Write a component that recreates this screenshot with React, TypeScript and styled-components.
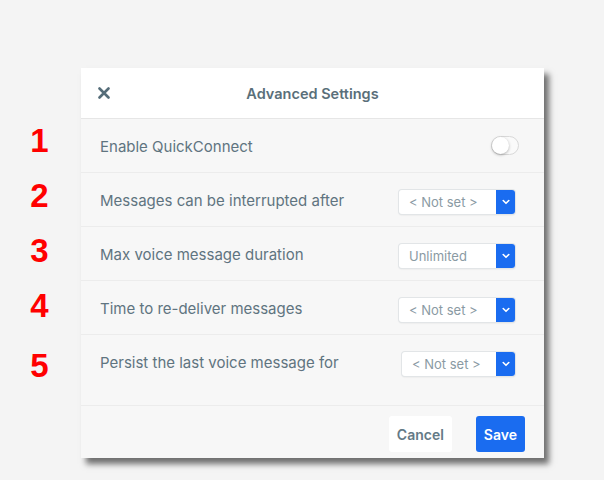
import styled, { createGlobalStyle } from "styled-components";

const GlobalStyle = createGlobalStyle`
  body {
    margin: 0;
    background: #f4f4f4;
    font-family: Inter, "Liberation Sans", Arial, sans-serif;
  }
`;

const settings = [
  { label: "Enable QuickConnect", kind: "toggle" },
  { label: "Messages can be interrupted after", kind: "select", value: "< Not set >" },
  { label: "Max voice message duration", kind: "select", value: "Unlimited" },
  { label: "Time to re-deliver messages", kind: "select", value: "< Not set >" },
  { label: "Persist the last voice message for", kind: "select", value: "< Not set >", shift: 3 },
];

export default function App() {
  return (
    <>
      <GlobalStyle />
      <StyledPage>
        <StyledNumbers>
          {settings.map((_, i) => (
            <StyledNumber key={i}>{i + 1}</StyledNumber>
          ))}
        </StyledNumbers>
        <StyledDialog>
          <StyledHeader>
            <StyledClose aria-label="Close">
              <svg width="12" height="12" viewBox="0 0 12 12">
                <path
                  d="M1.5 1.5 L10.5 10.5 M10.5 1.5 L1.5 10.5"
                  stroke="#556d79"
                  strokeWidth="2.6"
                  strokeLinecap="round"
                />
              </svg>
            </StyledClose>
            <StyledTitle>Advanced Settings</StyledTitle>
            <span />
          </StyledHeader>
          <StyledBody>
            {settings.map((s) => (
              <StyledRow key={s.label}>
                <StyledLabel>{s.label}</StyledLabel>
                {s.kind === "toggle" ? (
                  <StyledToggle>
                    <StyledKnob />
                  </StyledToggle>
                ) : (
                  <StyledSelect $shift={s.shift ?? 0}>
                    <StyledSelectValue>{s.value}</StyledSelectValue>
                    <StyledSelectArrow>
                      <svg width="8" height="6" viewBox="0 0 8 6">
                        <path
                          d="M1.2 1.5 L4 4.3 L6.8 1.5"
                          stroke="#fff"
                          strokeWidth="1.6"
                          fill="none"
                          strokeLinecap="round"
                          strokeLinejoin="round"
                        />
                      </svg>
                    </StyledSelectArrow>
                  </StyledSelect>
                )}
              </StyledRow>
            ))}
          </StyledBody>
          <StyledFooter>
            <StyledButton>Cancel</StyledButton>
            <StyledButton $primary>Save</StyledButton>
          </StyledFooter>
        </StyledDialog>
      </StyledPage>
    </>
  );
}

const StyledPage = styled.div`
  display: flex;
  padding-top: 68px;
  height: 480px;
  box-sizing: border-box;
`;

const StyledNumbers = styled.div`
  display: flex;
  flex-direction: column;
  width: 81px;
  padding-top: 45px;
  flex-shrink: 0;
`;

const StyledNumber = styled.div`
  height: 55px;
  display: flex;
  align-items: center;
  justify-content: center;
  padding-right: 2px;
  font-family: "Liberation Sans", Arial, sans-serif;
  font-weight: 700;
  font-size: 33px;
  color: #ff0000;

  &:last-child {
    padding-top: 5px;
  }
`;

const StyledDialog = styled.div`
  width: 463px;
  height: 390px;
  background: #f7f7f7;
  box-shadow: 5px 6px 6px rgba(0, 0, 0, 0.55);
  display: flex;
  flex-direction: column;
`;

const StyledHeader = styled.div`
  height: 50px;
  background: #ffffff;
  border-bottom: 1px solid #e6e6e6;
  display: grid;
  grid-template-columns: 60px 1fr 60px;
  align-items: center;
`;

const StyledClose = styled.button`
  border: none;
  background: none;
  padding: 0 0 0 17px;
  display: flex;
  align-items: center;
  cursor: pointer;
`;

const StyledTitle = styled.span`
  text-align: center;
  font-size: 14.5px;
  font-weight: 600;
  color: #5a6f7a;
`;

const StyledBody = styled.div`
  padding-bottom: 17px;
  border-bottom: 1px solid #ececec;
`;

const StyledRow = styled.div`
  height: 53px;
  display: flex;
  align-items: center;
  justify-content: space-between;
  padding: 0 29px 0 19px;
  border-bottom: 1px solid #ececec;

  &:last-child {
    border-bottom: none;
  }
`;

const StyledLabel = styled.span`
  padding-top: 2px;
  font-size: 15px;
  color: #5f7480;
`;

const StyledToggle = styled.div`
  width: 26px;
  height: 17px;
  margin-right: -4px;
  border: 1px solid #d9d9d9;
  border-radius: 10px;
  background: #fafafa;
  display: flex;
  align-items: center;
`;

const StyledKnob = styled.div`
  width: 17px;
  height: 17px;
  border-radius: 50%;
  background: #ffffff;
  box-shadow: 0 1px 3px rgba(0, 0, 0, 0.3);
`;

const StyledSelect = styled.div<{ $shift: number }>`
  width: ${(p) => 116 - p.$shift}px;
  height: 24px;
  margin-top: 4px;
  display: flex;
  border-radius: 3px;
  background: #ffffff;
  box-shadow: 0 0 0 1px #e2e5e7, 0 1px 2px rgba(0, 0, 0, 0.12);
  overflow: hidden;
`;

const StyledSelectValue = styled.span`
  flex: 1;
  display: flex;
  align-items: center;
  padding-left: 10px;
  font-size: 13px;
  color: #8a9aa3;
`;

const StyledSelectArrow = styled.span`
  width: 19px;
  background: #1a6cf0;
  display: flex;
  align-items: center;
  justify-content: center;
`;

const StyledFooter = styled.div`
  flex: 1;
  display: flex;
  align-items: center;
  justify-content: flex-end;
  gap: 24px;
  padding: 4px 19px 0 0;
`;

const StyledButton = styled.button<{ $primary?: boolean }>`
  height: 36px;
  padding: 0 8px;
  min-width: ${(p) => (p.$primary ? 49 : 62)}px;
  border: none;
  border-radius: 3px;
  font-family: Inter, "Liberation Sans", Arial, sans-serif;
  font-size: 14px;
  font-weight: 600;
  background: ${(p) => (p.$primary ? "#1a6cf0" : "#ffffff")};
  color: ${(p) => (p.$primary ? "#ffffff" : "#647a86")};
  cursor: pointer;
`;
